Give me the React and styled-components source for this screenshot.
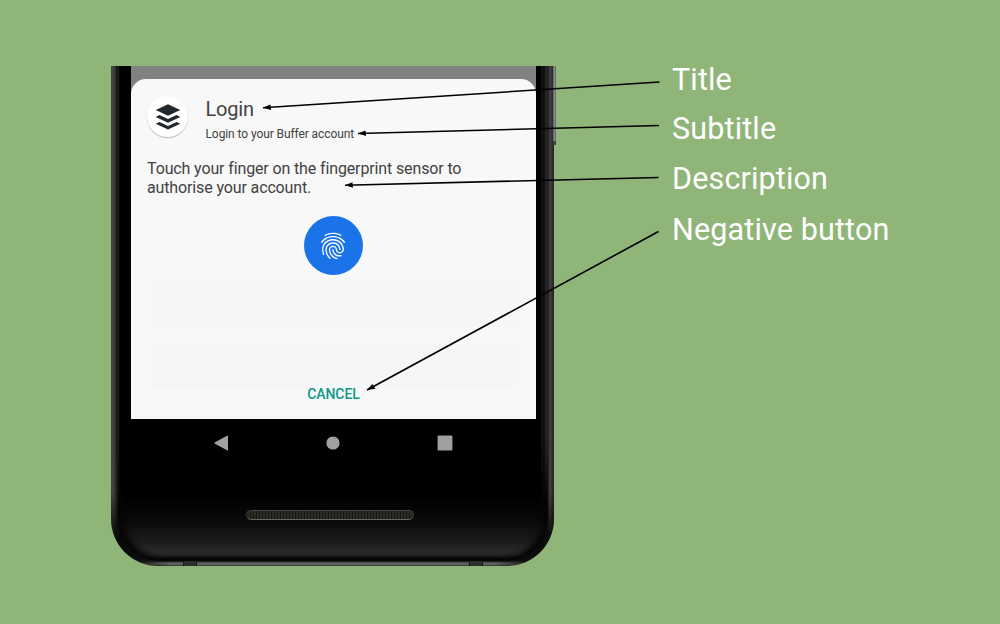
import React from "react";
import styled, { createGlobalStyle } from "styled-components";
import { MdFingerprint } from "react-icons/md";

const GlobalStyle = createGlobalStyle`
  * { box-sizing: border-box; }
  body { margin: 0; background: #90b578; font-family: Roboto, "Liberation Sans", sans-serif; }
`;

const Page = styled.main`
  position: relative;
  display: flex;
  align-items: flex-start;
  width: 1000px;
  height: 624px;
  padding: 66px 0 0 111px;
  background: #90b578;
  overflow: hidden;
`;

const Phone = styled.section`
  position: relative;
  flex: none;
  width: 443px;
  height: 500px;
  padding: 0 18px 0 20px;
  border-radius: 0 0 47px 47px;
  background:
    linear-gradient(90deg, #101010 20px, transparent 60px, transparent 383px, #101010 423px) 0 100% / 100% 6px no-repeat,
    linear-gradient(180deg, #070707, #2d2d2f 30%, #6c6c6f 60%, #555558 80%, #303032) 0 100% / 100% 6px no-repeat,
    linear-gradient(180deg, transparent 425px, rgba(8, 8, 8, 0.85) 470px, #101010 500px),
    linear-gradient(90deg, #39412f 0, #464647 1px, #3c3c3e 3px, #29292b 5px, #0b0b0b 6px, #222223 7px, #000 9px,
      #000 430px, #1c1c1d 431px, #070707 433px, #2d2d2e 435px, #1c1c1d 437px, #464648 439px, #303032 441px, #222 443px);
`;

const Face = styled.div`
  position: absolute;
  inset: 370px 6px 5px 7px;
  border-radius: 0 0 41px 41px;
  background: linear-gradient(180deg, #000 0, #000 60px, #090909 84px, #1b1b1b 105px, #2d2d2d 119px, #0a0a0a 124px);
  box-shadow: inset 7px -5px 6px -3px #050505, inset -7px -5px 6px -3px #050505, 0 0 1px #3c3c40;
  mask-image: linear-gradient(180deg, transparent, #000 70px);
`;

const SideButton = styled.div`
  position: absolute;
  left: 442px;
  top: 0;
  width: 3px;
  height: 79px;
  background: linear-gradient(90deg, #666568, #8a898c 60%, #5d5c5f);
  border-bottom: 4px solid #414142;
`;

const Seam = styled.div`
  position: absolute;
  left: ${(p) => p.$left}px;
  bottom: 0;
  width: 14px;
  height: 5px;
  background: #2d2d2e;
  border: 1px solid #151516;
  border-width: 0 1px;
`;

const Screen = styled.div`
  position: relative;
  width: 405px;
  height: 353px;
  padding-top: 13px;
  background: #818181;
`;

const Sheet = styled.div`
  position: relative;
  display: flex;
  flex-direction: column;
  height: 340px;
  padding: 17px 16px 0;
  border-radius: 15px 15px 0 0;
  background: #f8f8f8;
  color: #424242;
`;

const Header = styled.header`
  display: flex;
  height: 41px;
`;

const Avatar = styled.div`
  display: grid;
  place-items: center;
  width: 41px;
  height: 41px;
  border-radius: 50%;
  background: #fff;
  box-shadow: 0 1px 1px rgba(0, 0, 0, 0.25);
`;

const Heading = styled.div`
  padding-left: 17.5px;
`;

const Title = styled.h1`
  margin: 0;
  font-size: 20px;
  font-weight: 400;
  line-height: 26px;
  letter-spacing: -0.2px;
`;

const Subtitle = styled.p`
  margin: 4px 0 0;
  font-size: 12px;
  line-height: 16px;
  letter-spacing: -0.09px;
`;

const Description = styled.p`
  margin: 23px 0 0;
  font-size: 16px;
  line-height: 18.5px;
  letter-spacing: -0.13px;
  white-space: nowrap;
`;

const Sensor = styled.div`
  display: grid;
  place-items: center;
  width: 59px;
  height: 59px;
  margin: 19px auto 0;
  padding-right: 1px;
  border-radius: 50%;
  background: #1a73e8;
  color: #fff;
`;

const Ghosts = styled.div`
  display: grid;
  gap: 17px;
  margin: 7px 2px 0 3px;
`;

const Ghost = styled.div`
  display: grid;
  place-items: center;
  height: 45px;
  border-radius: 2px;
  background: #f4f6f8;
  color: #f6f7f8;
  font-size: 14px;
`;

const Cancel = styled.button`
  position: relative;
  align-self: center;
  margin: -4px 0 0;
  padding: 0;
  border: 0;
  background: none;
  color: #0b9888;
  font: 500 14px/18px Roboto, sans-serif;
  letter-spacing: -0.1px;
`;

const NavBar = styled.nav`
  position: relative;
  display: flex;
  justify-content: space-between;
  align-items: center;
  height: 48px;
  padding: 0 83px 0 82px;
`;

const Speaker = styled.div`
  position: relative;
  width: 168px;
  height: 10px;
  margin: 43px 0 0 115px;
  border-radius: 5px;
  border: 1px solid #454541;
  border-bottom-color: #656561;
  background: repeating-linear-gradient(90deg, #171713 0 1px, #2c2b26 1px 3px);
`;

const Labels = styled.aside`
  padding: 0 0 0 118px;
  color: #fff;
  font-size: 30.5px;
  line-height: 28px;
  letter-spacing: 0.15px;
  white-space: nowrap;
`;

const Label = styled.div`
  height: ${(p) => p.$height}px;
`;

const Arrows = styled.svg`
  position: absolute;
  inset: 0;
  pointer-events: none;
`;

const ARROWS = [
  [659.5, 82, 263, 107.7],
  [659, 125.5, 358, 133.5],
  [658.5, 177.5, 345, 185.2],
  [658.5, 231.5, 367, 390],
];

function Arrow({ points: [x1, y1, x2, y2] }) {
  const angle = (Math.atan2(y2 - y1, x2 - x1) * 180) / Math.PI;
  return (
    <g>
      <path d={`M${x1} ${y1}L${x2} ${y2}`} stroke="#000" strokeWidth="1.6" />
      <path d="M0 0L-8 -2.8L-7.5 2.8Z" transform={`translate(${x2} ${y2}) rotate(${angle})`} />
    </g>
  );
}

function BufferLogo() {
  return (
    <svg width="26" height="26" viewBox="0 0 26 26" fill="#22292e">
      <path d="M13 .2L25.3 6L13 11.8L.7 6Z" />
      <path d="M.7 12.9L4.4 11.1L13 15.1L21.6 11.1L25.3 12.9L13 18.8Z" />
      <path d="M.7 19.7L4.4 17.9L13 21.9L21.6 17.9L25.3 19.7L13 25.6Z" />
    </svg>
  );
}

export default function App() {
  return (
    <Page>
      <GlobalStyle />
      <Phone>
        <SideButton />
        <Seam $left={72} />
        <Seam $left={358} />
        <Face />
        <Screen>
          <Sheet>
            <Header>
              <Avatar><BufferLogo /></Avatar>
              <Heading>
                <Title>Login</Title>
                <Subtitle>Login to your Buffer account</Subtitle>
              </Heading>
            </Header>
            <Description>
              Touch your finger on the fingerprint sensor to<br />authorise your account.
            </Description>
            <Sensor><MdFingerprint size={32} /></Sensor>
            <Ghosts>
              <Ghost>I'm new to Buffer</Ghost>
              <Ghost>I already have an account</Ghost>
            </Ghosts>
            <Cancel>CANCEL</Cancel>
          </Sheet>
        </Screen>
        <NavBar>
          <svg width="16" height="16" fill="#a0a0a0"><path d="M14.4 .5Q15 .2 15 1V15Q15 15.8 14.4 15.5L1.6 8.5Q.8 8 1.6 7.5Z" /></svg>
          <svg width="14" height="14" fill="#a0a0a0"><circle cx="7" cy="7" r="6.6" /></svg>
          <svg width="16" height="16" fill="#a0a0a0"><rect x=".6" y=".6" width="14.8" height="14.8" rx="1" /></svg>
        </NavBar>
        <Speaker />
      </Phone>
      <Labels>
        <Label $height={49}>Title</Label>
        <Label $height={50}>Subtitle</Label>
        <Label $height={51}>Description</Label>
        <Label $height={30}>Negative button</Label>
      </Labels>
      <Arrows width="1000" height="624">
        {ARROWS.map((points) => <Arrow key={points[1]} points={points} />)}
      </Arrows>
    </Page>
  );
}
